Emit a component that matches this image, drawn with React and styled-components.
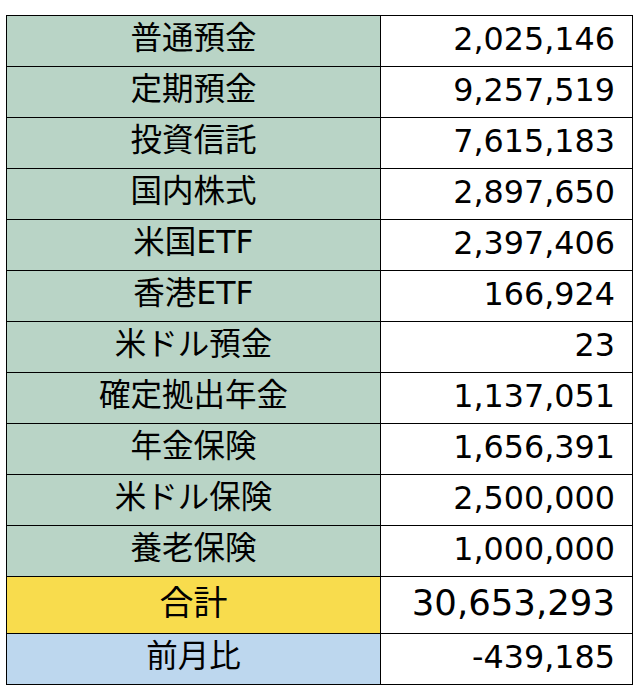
import React from "react";
import styled, { createGlobalStyle } from "styled-components";

const GlobalStyle = createGlobalStyle`
  html, body {
    margin: 0;
    padding: 0;
    background: #ffffff;
  }
`;

const Page = styled.div`
  padding: 15px 0 0 6px;
`;

const Table = styled.table`
  border-collapse: collapse;
  width: 627px;
  table-layout: fixed;
  font-family: "DejaVu Sans", "Noto Sans CJK JP", sans-serif;
  color: #000;
`;

const Row = styled.tr`
  height: ${(p) => (p.$total ? 57 : 51)}px;
`;

const Label = styled.td`
  width: 373px;
  border: 1px solid #000;
  background: ${(p) => p.$bg};
  text-align: center;
  font-size: ${(p) => (p.$total ? 34 : 31.5)}px;
  padding: 0 0 5px;
  line-height: 1;
`;

const Value = styled.td`
  border: 1px solid #000;
  background: #fff;
  text-align: right;
  font-size: ${(p) => (p.$total ? 35.5 : 31.8)}px;
  padding: 0 17px 5px 0;
  line-height: 1;
`;

const GREEN = "#b9d4c6";
const YELLOW = "#f8dc4d";
const BLUE = "#bdd7ee";

const rows = [
  ["普通預金", "2,025,146"],
  ["定期預金", "9,257,519"],
  ["投資信託", "7,615,183"],
  ["国内株式", "2,897,650"],
  ["米国ETF", "2,397,406"],
  ["香港ETF", "166,924"],
  ["米ドル預金", "23"],
  ["確定拠出年金", "1,137,051"],
  ["年金保険", "1,656,391"],
  ["米ドル保険", "2,500,000"],
  ["養老保険", "1,000,000"],
];

export default function App() {
  return (
    <>
      <GlobalStyle />
      <Page>
        <Table>
          <tbody>
            {rows.map(([label, value]) => (
              <Row key={label}>
                <Label $bg={GREEN}>{label}</Label>
                <Value>{value}</Value>
              </Row>
            ))}
            <Row $total>
              <Label $bg={YELLOW} $total>合計</Label>
              <Value $total>30,653,293</Value>
            </Row>
            <Row>
              <Label $bg={BLUE}>前月比</Label>
              <Value>-439,185</Value>
            </Row>
          </tbody>
        </Table>
      </Page>
    </>
  );
}
